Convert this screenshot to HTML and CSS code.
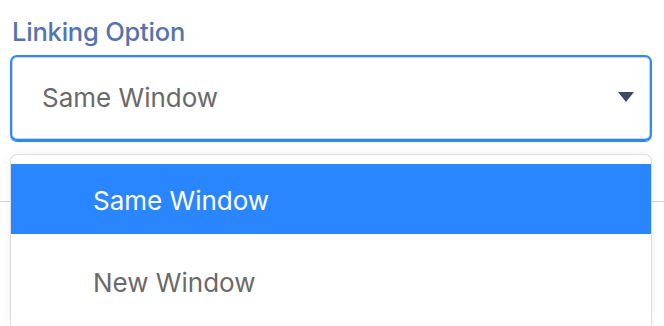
FILE: index.html
```html
<!DOCTYPE html>
<html>
<head>
<meta charset="utf-8">
<link rel="stylesheet" href="styles.css">
</head>
<body>
<div class="field">
  <div class="label">Linking Option</div>
  <div class="select">
    <span class="value">Same Window</span>
    <svg class="caret" width="16" height="10" viewBox="0 0 16 10"><path d="M0 0 H16 L8 10 Z" fill="#3e4968"/></svg>
  </div>
  <div class="below">
    <div class="rule"></div>
    <ul class="menu">
      <li class="option active">Same Window</li>
      <li class="option">New Window</li>
    </ul>
  </div>
</div>
</body>
</html>
```

FILE: styles.css
```css
html, body {
  margin: 0;
  padding: 0;
  background: #ffffff;
  overflow: hidden;
  height: 326px;
}
.field {
  font-family: Inter, "Noto Sans", sans-serif;
  padding: 16px 12px 0 10px;
}
.label {
  font-size: 25.5px;
  line-height: 32px;
  font-weight: 500;
  letter-spacing: -0.2px;
  color: #5574ad;
  padding-left: 2px;
  margin-bottom: 7px;
}
.select {
  box-sizing: border-box;
  height: 86px;
  border: 2px solid #2b86ff;
  border-radius: 7px;
  box-shadow: inset 0 0 0 1px #cfd3dd, 0 1px 0 #2b86ff;
  display: flex;
  align-items: center;
  justify-content: space-between;
  padding: 0 16px 0 30px;
}
.value {
  font-size: 26px;
  line-height: 32px;
  color: #696969;
}
.caret {
  display: block;
  margin-top: -3px;
}
.below {
  position: relative;
  height: 185px;
}
.rule {
  position: absolute;
  left: -10px;
  right: -12px;
  top: 60px;
  height: 1px;
  background: #d6d6d6;
}
.menu {
  position: absolute;
  left: 0;
  right: 0;
  top: 13px;
  bottom: 0;
  margin: 0;
  list-style: none;
  padding: 9px 0 0 0;
  background: #ffffff;
  border: 1px solid #dddddd;
  border-bottom: none;
  border-radius: 7px 7px 0 0;
  box-shadow: 0 0 12px rgba(0, 0, 0, 0.06);
  display: flex;
  flex-direction: column;
  gap: 12px;
  overflow: hidden;
}
.option {
  font-size: 26px;
  line-height: 32px;
  color: #6a6a6a;
  padding: 21px 0 17px 82px;
}
.option.active {
  background: #2a86ff;
  color: #ffffff;
}
```
